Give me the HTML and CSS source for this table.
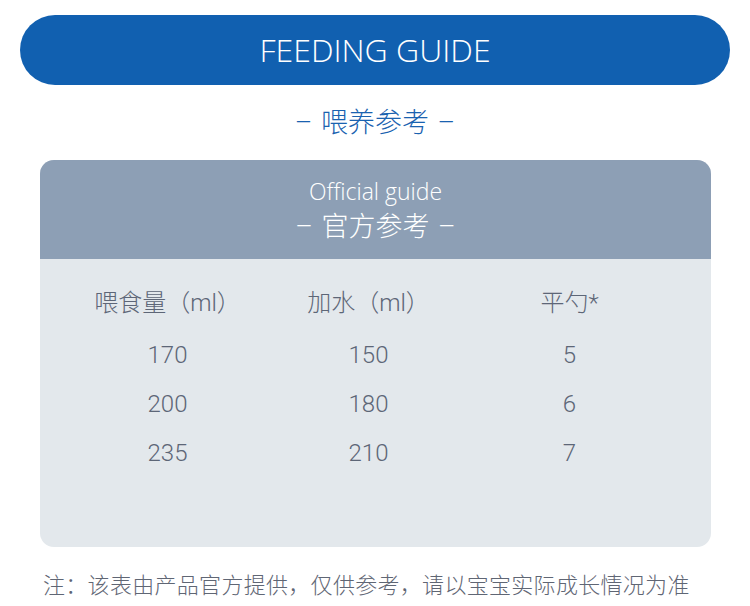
FILE: index.html
```html
<!DOCTYPE html>
<html lang="zh">
<head>
<meta charset="utf-8">
<title>Feeding Guide</title>
<link rel="stylesheet" href="styles.css">
</head>
<body>
<div class="page">
  <div class="banner">FEEDING GUIDE</div>
  <div class="subtitle">– 喂养参考 –</div>
  <div class="card">
    <div class="card-head">
      <div class="head-en">Official guide</div>
      <div class="head-cn">– 官方参考 –</div>
    </div>
    <div class="card-body">
      <div class="grid">
        <div class="cell th">喂食量（ml）</div>
        <div class="cell th">加水（ml）</div>
        <div class="cell th">平勺*</div>
        <div class="cell">170</div>
        <div class="cell">150</div>
        <div class="cell">5</div>
        <div class="cell">200</div>
        <div class="cell">180</div>
        <div class="cell">6</div>
        <div class="cell">235</div>
        <div class="cell">210</div>
        <div class="cell">7</div>
      </div>
    </div>
  </div>
  <div class="note">注：该表由产品官方提供，仅供参考，请以宝宝实际成长情况为准</div>
</div>
</body>
</html>
```
FILE: styles.css
```css
html, body {
  margin: 0;
  padding: 0;
  background: #ffffff;
}
.page {
  width: 750px;
  height: 606px;
  overflow: hidden;
  font-family: Roboto, "Noto Sans CJK SC", sans-serif;
  font-weight: 300;
  padding-top: 15px;
  box-sizing: border-box;
}
.banner {
  margin: 0 20px;
  height: 70px;
  border-radius: 35px;
  background: #1160b0;
  color: #ffffff;
  font-family: "Open Sans", "Noto Sans CJK SC", sans-serif;
  font-weight: 300;
  font-size: 32px;
  line-height: 70px;
  text-align: center;
}
.subtitle {
  margin-top: 22px;
  height: 32px;
  line-height: 32px;
  text-align: center;
  color: #1a62b0;
  font-size: 27px;
  word-spacing: 2px;
}
.card {
  margin: 21px 39px 0 40px;
  border-radius: 14px;
  overflow: hidden;
  background: #e3e8ec;
  height: 387px;
}
.card-head {
  height: 99px;
  background: #8d9fb5;
  color: #ffffff;
  text-align: center;
  padding-top: 17px;
  box-sizing: border-box;
}
.head-en {
  font-family: "Open Sans", "Noto Sans CJK SC", sans-serif;
  font-weight: 300;
  font-size: 23px;
  line-height: 28px;
}
.head-cn {
  font-size: 27px;
  line-height: 38px;
  margin-top: 3px;
  word-spacing: 2px;
}
.card-body {
  padding-top: 20px;
  padding-left: 27px;
}
.grid {
  display: grid;
  grid-template-columns: 201px 201px 201px;
  grid-template-rows: 52px 49px 49px 49px;
  color: #5d6677;
  font-size: 24px;
}
.cell {
  text-align: center;
  line-height: 49px;
}
.note {
  margin-top: 26px;
  padding-left: 43px;
  color: #5f6674;
  font-size: 22px;
  letter-spacing: 0.3px;
  line-height: 26px;
}
```
